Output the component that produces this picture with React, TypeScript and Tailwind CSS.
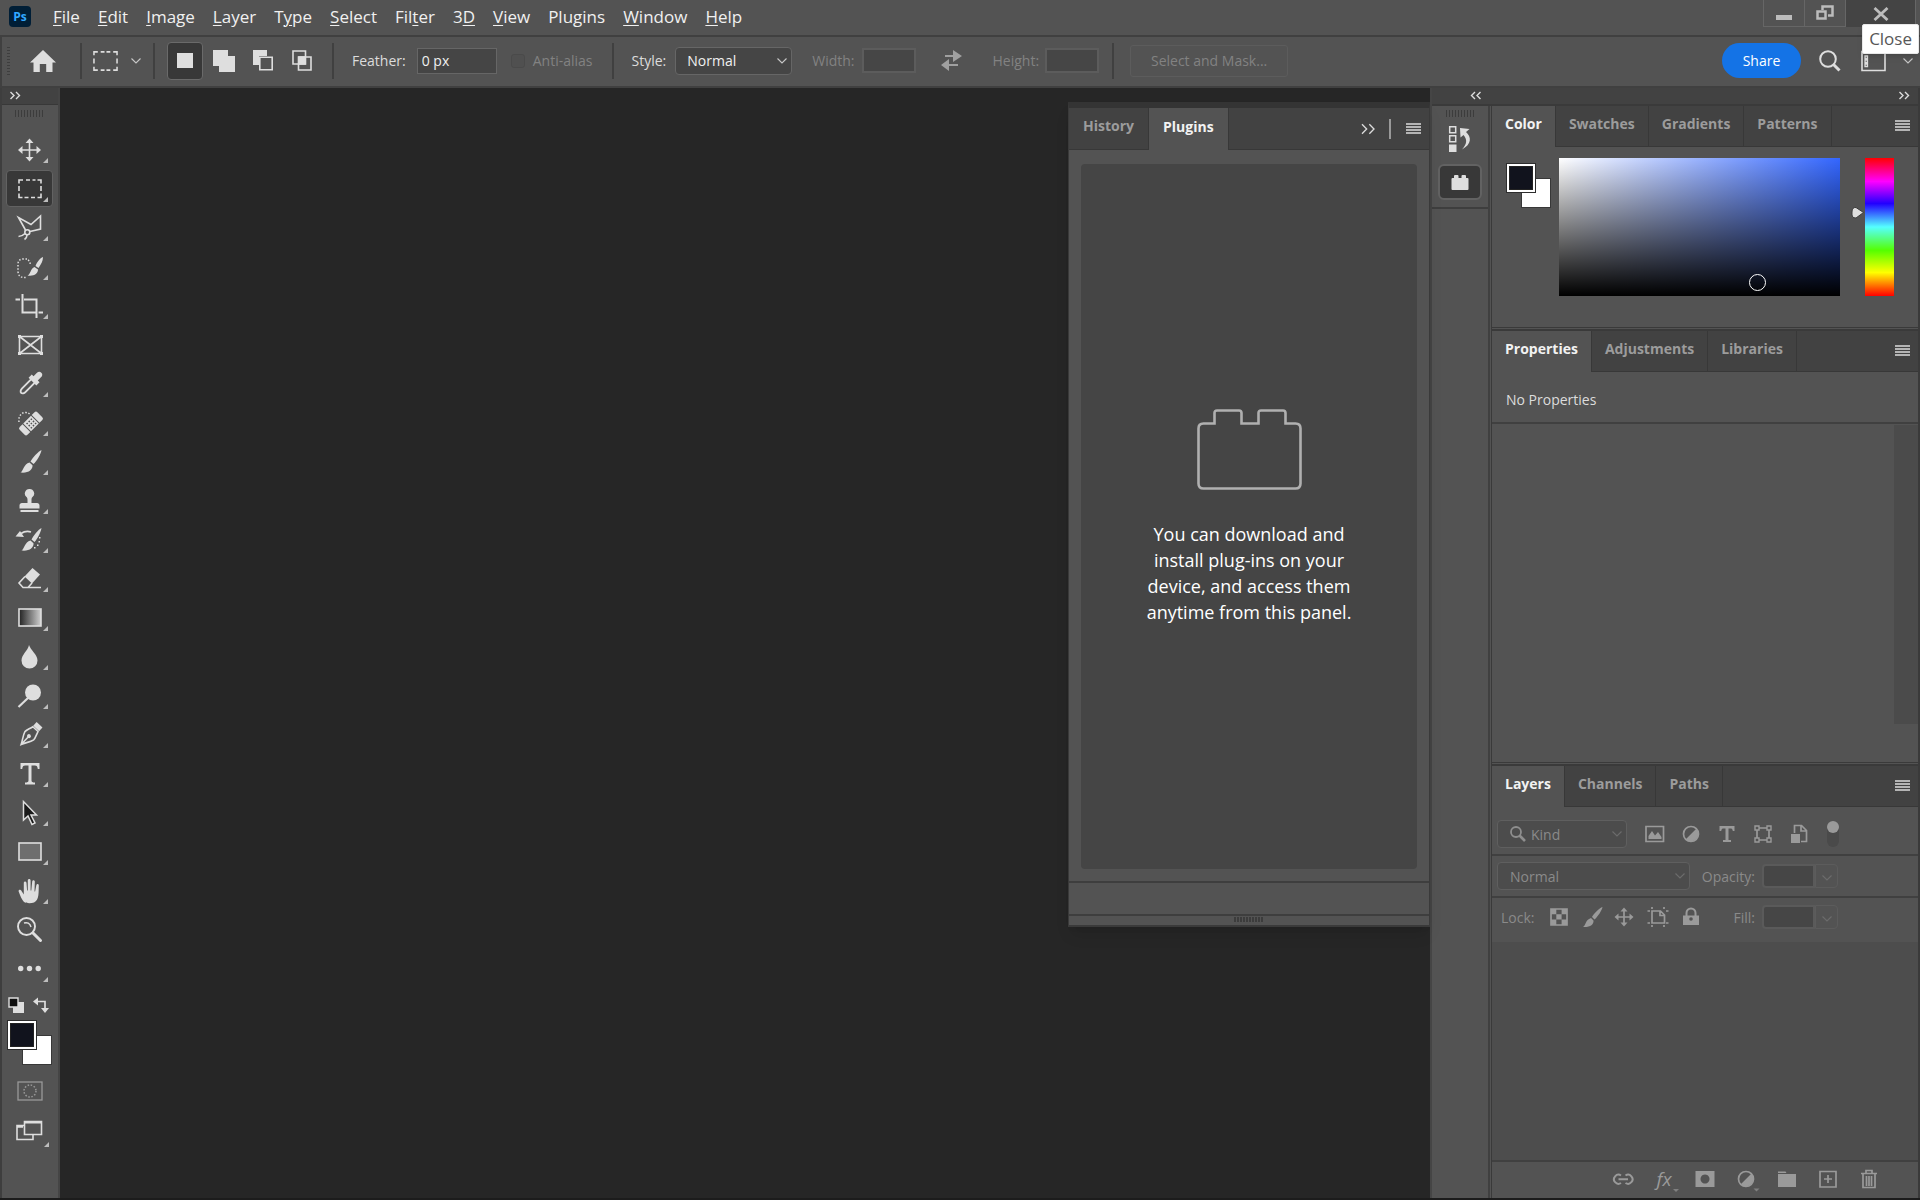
import React from "react";

type Kids = { children?: React.ReactNode };

/* ---------- shared bits ---------- */

const Chevron = ({ className = "text-[#c8c8c8]" }: { className?: string }) => (
  <svg width="12" height="8" viewBox="0 0 12 8" fill="none" stroke="currentColor" strokeWidth="1.1" className={className}>
    <path d="M1.500 1.500 6 6l4.500-4.500" />
  </svg>
);

const DoubleChevron = ({ left = false, large = false }: { left?: boolean; large?: boolean }) => (
  <svg
    width={large ? 16 : 12}
    height={large ? 12 : 9}
    viewBox="0 0 12 9"
    fill="none"
    stroke="#dcdcdc"
    strokeWidth={large ? 1 : 1.4}
    className={left ? "rotate-180" : ""}
  >
    <path d="M1.500 1l3.500 3.500L1.500 8M7 1l3.500 3.500L7 8" />
  </svg>
);

const MenuLines = () => (
  <svg width="15" height="12" viewBox="0 0 15 12" fill="#b4b4b4">
    <path d="M0 0h15v2H0zM0 3h15v2H0zM0 6h15v2H0zM0 9h15v2H0z" />
  </svg>
);

const Grip = () => (
  <svg width="28" height="7" viewBox="0 0 28 7" fill="#3c3c3c" aria-hidden="true">
    <path d="M0 0h1v7H0zM3 0h1v7H3zM6 0h1v7H6zM9 0h1v7H9zM12 0h1v7h-1zM15 0h1v7h-1zM18 0h1v7h-1zM21 0h1v7h-1zM24 0h1v7h-1zM27 0h1v7h-1z" />
  </svg>
);

const Divider = ({ className = "" }: { className?: string }) => (
  <div className={`h-9 w-[2px] shrink-0 bg-[#404040] ${className}`} />
);

const Brush = () => (
  <>
    <path d="M24.500 1c-3 1.500-9 7.500-11 11.500l3 2.500c3.500-3 7.500-10.500 8-14z" />
    <path d="M12.500 13.500l3 2.700c.5 4.500-4.500 8.300-12 7.300 3-1.500 3-8.500 9-10z" />
  </>
);

/* ---------- tool bar ---------- */

const S = { fill: "none", stroke: "#dedede", strokeWidth: 1.6 };

const tools: { name: string; icon: React.ReactNode; menu?: boolean }[] = [
  {
    name: "Move",
    icon: (
      <>
        <path d="M12.500 4v18M4 13h17" {...S} />
        <path d="M12.500 1.500l4 4.500h-8zM12.500 24.500l4-4.500h-8zM1 13l4.500-4v8zM24 13l-4.500-4v8z" />
      </>
    ),
  },
  {
    name: "Rectangular Marquee",
    icon: <path d="M2 7.500V4h4M9 4h4M15.500 4h3M20.500 4H24v3.500M24 10v5M24 17.500V21.500h-3.500M18 21.500h-4M11.500 21.500h-4M5.500 21.500H2v-4M2 15v-5" {...S} />,
  },
  {
    name: "Polygonal Lasso",
    icon: (
      <>
        <path d="M8.500 15L1.500 2.500 14 9.500 23.500 1v13L13 16.500" {...S} />
        <circle cx="10.300" cy="17.300" r="2.500" {...S} />
        <path d="M8 18.500c-2 2-4 3-6.500 3M10 20c0 2-1 3.500-2.500 4.500" {...S} />
      </>
    ),
  },
  {
    name: "Quick Selection",
    icon: (
      <>
        <path d="M10 5H6C3 5 1 7 1 10v7c0 4 2 6.500 6 6.500h3M11 6c1 .5 2 2 2.300 4" fill="none" stroke="#dedede" strokeWidth="1.500" strokeDasharray="1.500 1.700" />
        <path d="M26 3c-3 1-6 5-7.500 9l3 2C24 10.500 26 7 26 3zM17.500 13l3.500 2.500c0 4-4 7-10.500 6 3-1 3-7 7-8.500z" />
      </>
    ),
  },
  {
    name: "Crop",
    icon: <path d="M5.500 1v18.500h13M-1.500 6.500H3M7 6.500h12.500V25M21.500 19.500H26" fill="none" stroke="#dedede" strokeWidth="2" />,
  },
  {
    name: "Frame",
    icon: (
      <>
        <path d="M2.500 4.500h22v17h-22zM2.500 4.500l22 17M24.500 4.500l-22 17" {...S} />
        <path d="M1 3h3v3H1zM23 3h3v3h-3zM1 20h3v3H1zM23 20h3v3h-3z" />
      </>
    ),
    menu: false,
  },
  {
    name: "Eyedropper",
    icon: (
      <g transform="rotate(45 13 13)">
        <path d="M10 0.500a3 3.500 0 0 1 6 0V5h2.500v4.500h-11V5H10z" />
        <path d="M10.500 9v13c0 1.500 1 3.500 2.500 3.500s2.500-2 2.500-3.500V9" {...S} strokeWidth="1.900" />
      </g>
    ),
  },
  {
    name: "Spot Healing Brush",
    icon: (
      <>
        <path d="M2 12C1 6 5 2 9 2.500c2 .3 3 1 4 2" fill="none" stroke="#dedede" strokeWidth="1.500" strokeDasharray="1.500 1.700" />
        <g transform="rotate(-45 14 13.500)">
          <path d="M1.500 10a2 2 0 0 1 2-2h4v11h-4a2 2 0 0 1-2-2zM20.500 8h4a2 2 0 0 1 2 2v7a2 2 0 0 1-2 2h-4zM8.500 8h11v11h-11z" />
          <path d="M10.500 10h1.500v1.500h-1.500zM13.500 10H15v1.500h-1.500zM16.500 10H18v1.500h-1.500zM10.500 13h1.500v1.500h-1.500zM13.500 13H15v1.500h-1.500zM16.500 13H18v1.500h-1.500zM10.500 16h1.500v1.500h-1.500zM13.500 16H15v1.500h-1.500zM16.500 16H18v1.500h-1.500z" fill="#535353" />
        </g>
      </>
    ),
  },
  { name: "Brush", icon: <Brush /> },
  {
    name: "Clone Stamp",
    icon: <path d="M12.500 1a4.500 4.500 0 0 1 3 8c-.8.800-1 1.500-1 3v3H20c1.500 0 2.500 1 2.500 2.500v3h-20v-3C2.500 16 3.500 15 5 15h5.500v-3c0-1.500-.2-2.200-1-3a4.500 4.500 0 0 1 3-8zM3.500 22h18v2h-18z" />,
  },
  {
    name: "History Brush",
    icon: (
      <>
        <path d="M24.500 1c-3 1.500-8 7.500-10 11.500l3 2.500c3-3 6.500-10.500 7-14zM13.500 13.500l3 2.700c.5 4.500-4.500 8.300-12 7.300 3-1.500 3-8.500 9-10z" />
        <path d="M-1.500 9.500L3 4l4 6z" />
        <path d="M4 6.500c3-2 7-2.500 10-1.500" {...S} />
        <path d="M22 10h1.500v1.500H22zM21.500 14H23v1.500h-1.500zM20 17.500h1.500V19H20zM17 20h1.500v1.500H17z" />
      </>
    ),
  },
  {
    name: "Eraser",
    icon: (
      <>
        <path d="M7.500 10.500l8-8.500 7.500 6.500-8 9z" />
        <path d="M8 10.500l-6 6.500 4 4.500h5l4-4.500M6 21.500h18" {...S} />
      </>
    ),
  },
  {
    name: "Gradient",
    icon: (
      <>
        <defs>
          <linearGradient id="toolGradient">
            <stop offset="0" stopColor="#222" />
            <stop offset="1" stopColor="#d0d0d0" />
          </linearGradient>
        </defs>
        <rect x="2" y="4" width="22" height="17" fill="url(#toolGradient)" stroke="#dedede" strokeWidth="1.600" />
      </>
    ),
  },
  { name: "Blur", icon: <path d="M12 1c1.500 5 8.500 9.500 8.500 15.500a8 8 0 0 1-16 0C4.500 10.500 11 6.500 12 1z" /> },
  {
    name: "Dodge",
    icon: (
      <>
        <circle cx="16" cy="9.500" r="8" />
        <path d="M11 15l-9.500 9" fill="none" stroke="#dedede" strokeWidth="2.200" />
      </>
    ),
  },
  {
    name: "Pen",
    icon: (
      <g transform="rotate(43 13 13)">
        <path d="M9 -1h8v5H9z" />
        <path d="M9.500 5h7c1 4 2.500 6 2.500 9-1 4-4 7.500-6 12-2-4.500-5-8-6-12 0-3 1.500-5 2.500-9zM13 25v-9" {...S} />
        <circle cx="13" cy="14.500" r="2" />
      </g>
    ),
  },
  {
    name: "Type",
    icon: <path d="M3.500 2h19v6H20.800c-.3-2.500-1-3.500-3-3.500h-3.300v15c0 1.500 1 2 3.500 2V23.500H8V21.500c2.500 0 3.500-.5 3.500-2v-15H8.200c-2 0-2.700 1-3 3.500H3.500z" />,
  },
  {
    name: "Path Selection",
    icon: <path d="M6.500 1.500v18.500l4.500-4 4 8.500 3-1.500-4-8h5.500z" fill="#1a1a1a" stroke="#dedede" strokeWidth="1.500" />,
  },
  { name: "Rectangle", icon: <rect x="2" y="4" width="22" height="17" fill="#6e6e6e" stroke="#dedede" strokeWidth="1.600" /> },
  {
    name: "Hand",
    icon: <path d="M7 24c-2-2-4-6.500-5.500-11 .5-1.800 2.500-1.300 3.200.3l2.100 3.200V5c0-2 2.500-2 2.700 0l.6 7.500h.7V2.500c0-2 2.800-2 2.800 0v10h.7l.9-9c.3-1.800 2.700-1.500 2.600.3l-.3 9.700h.6l1.300-6.500c.4-1.600 2.500-1.200 2.400.5C21.500 14 22.500 22 17 24.500c-3 1-7.500 1-10-.5z" />,
  },
  {
    name: "Zoom",
    icon: (
      <>
        <circle cx="9.500" cy="9.500" r="8.500" fill="none" stroke="#dedede" strokeWidth="1.900" />
        <path d="M7 6c3-1 6 0 7 4" fill="none" stroke="#dedede" strokeWidth="1.500" />
        <path d="M16 16l7.500 7.500" fill="none" stroke="#dedede" strokeWidth="3" strokeLinecap="round" />
      </>
    ),
    menu: false,
  },
  {
    name: "Edit Toolbar",
    icon: (
      <>
        <circle cx="3.700" cy="12.500" r="2.700" />
        <circle cx="12.500" cy="12.500" r="2.700" />
        <circle cx="21.200" cy="12.500" r="2.700" />
      </>
    ),
  },
];

const CornerMark = () => (
  <svg width="5" height="5" viewBox="0 0 5 5" fill="#bdbdbd" className="absolute right-1 bottom-1">
    <path d="M5 0v5H0z" />
  </svg>
);

function ColorPair({ className = "" }: { className?: string }) {
  return (
    <div className={`relative h-[45px] w-[45px] shrink-0 ${className}`}>
      <button aria-label="Background color" className="absolute right-0 bottom-0 h-[30px] w-[30px] border border-[#383838] bg-white" />
      <button aria-label="Foreground color" className="absolute top-0 left-0 h-[30px] w-[30px] border border-[#2d2d2d] bg-white p-[2px]">
        <span className="block h-full w-full border border-[#222] bg-[#11131d]" />
      </button>
    </div>
  );
}

function ToolBar() {
  return (
    <aside className="flex w-[60px] shrink-0 flex-col border-r-2 border-l-2 border-r-[#454545] border-l-[#3e3e3e] bg-[#535353]">
      <div className="flex h-[17px] shrink-0 items-center border-b border-[#383838] bg-[#424242] pb-px pl-[7px]">
        <DoubleChevron />
      </div>
      <div className="flex h-[26px] shrink-0 items-start pt-[5px] pl-[13px]">
        <Grip />
      </div>
      {tools.map((t, i) => (
        <button
          key={t.name}
          aria-label={`${t.name} Tool`}
          className={
            "relative mb-[2px] ml-[4px] flex h-[37px] w-[47px] shrink-0 items-center justify-center rounded-sm border " +
            (i === 1 ? "border-[#626262] bg-[#383838]" : "border-transparent")
          }
        >
          <svg width="26" height="26" viewBox="0 0 26 26" fill="#dedede" className="overflow-visible">
            {t.icon}
          </svg>
          {t.menu !== false && <CornerMark />}
        </button>
      ))}
      <div className="flex shrink-0 justify-between pt-2 pr-[9px] pl-[6px]">
        <button aria-label="Default colors">
          <svg width="16" height="16" viewBox="0 0 16 16">
            <path d="M5 5h11v11H5z" fill="#dedede" />
            <path d="M1 1h9v9H1z" fill="#111" stroke="#dedede" strokeWidth="1.400" />
          </svg>
        </button>
        <button aria-label="Swap colors">
          <svg width="16" height="16" viewBox="0 0 16 16" fill="#dedede">
            <path d="M3 4.500h9V13" fill="none" stroke="#dedede" strokeWidth="1.700" />
            <path d="M0 4.500L5 .5v8zM12 16l-4-5h8z" />
          </svg>
        </button>
      </div>
      <ColorPair className="mt-[7px] ml-[5px]" />
      <button aria-label="Quick mask" className="mt-4 ml-[15px] w-[26px] shrink-0">
        <svg width="26" height="20" viewBox="0 0 26 20" fill="none" stroke="#999">
          <rect x="1" y="1" width="24" height="18" strokeWidth="1.300" />
          <circle cx="13" cy="10" r="6" strokeWidth="1.500" strokeDasharray="1.500 1.640" />
        </svg>
      </button>
      <button aria-label="Screen mode" className="relative mt-[13px] ml-[4px] h-[37px] w-[47px] shrink-0">
        <svg width="27" height="21" viewBox="0 0 27 21" className="mb-1 ml-[10px]" fill="#535353" stroke="#dedede" strokeWidth="1.600">
          <path d="M1 5.500h16v14H1z" />
          <path d="M8.500 1.500h17v13h-17z" />
          <path d="M8 2.200h18M1 6.500h6" strokeWidth="2.500" />
        </svg>
        <CornerMark />
      </button>
    </aside>
  );
}

/* ---------- title and options bars ---------- */

const menus: [string, string, string][] = [
  ["", "F", "ile"],
  ["", "E", "dit"],
  ["", "I", "mage"],
  ["", "L", "ayer"],
  ["T", "y", "pe"],
  ["", "S", "elect"],
  ["Fil", "t", "er"],
  ["3", "D", ""],
  ["", "V", "iew"],
  ["Plugins", "", ""],
  ["", "W", "indow"],
  ["", "H", "elp"],
];

function TitleBar() {
  return (
    <header className="flex h-[37px] shrink-0 items-center border-b-2 border-[#404040] pb-[2px] pl-[9px]">
      <div className="flex h-[21px] w-[22px] items-center justify-center rounded bg-[#001e36] text-[12px] font-bold text-[#31a8ff]">Ps</div>
      <nav className="ml-[22px] flex gap-[18px] text-[17px] text-[#f0f0f0]">
        {menus.map(([a, b, c]) => (
          <button key={a + b + c} className="leading-6">
            {a}
            <span className="underline decoration-1 underline-offset-2">{b}</span>
            {c}
          </button>
        ))}
      </nav>
      <div className="mr-[4px] ml-auto flex h-[27px] self-start text-[#bcbcbc]">
        <button aria-label="Minimize" className="flex w-[42px] items-center justify-center border border-t-0 border-[#666]">
          <svg width="16" height="16" viewBox="0 0 16 16">
            <path d="M0 10h16v5H0z" fill="currentColor" />
          </svg>
        </button>
        <button aria-label="Restore" className="flex w-[41px] items-center justify-center border-r border-b border-[#666]">
          <svg width="18" height="16" viewBox="0 0 18 16" fill="none" stroke="currentColor" strokeWidth="2.500">
            <path d="M6.500 5V1.500h10v9H12" />
            <path d="M1.500 6.500h8v7h-8z" />
          </svg>
        </button>
        <button aria-label="Close" className="flex w-[70px] items-center justify-center border-r border-[#666] bg-[#444]">
          <svg width="16" height="14" viewBox="0 0 16 14" fill="none" stroke="currentColor" strokeWidth="2.800">
            <path d="M1.500 1l13 12M14.500 1l-13 12" />
          </svg>
        </button>
      </div>
    </header>
  );
}

function OptionsBar() {
  return (
    <div className="relative flex h-[51px] shrink-0 items-center border-b-2 border-l-2 border-[#404040] pr-[6px] pb-[2px] text-[14px] text-[#dcdcdc]">
      <svg width="3" height="28" viewBox="0 0 3 28" className="ml-[5px]">
        <path d="M1.500 0v28" stroke="#3e3e3e" strokeWidth="3" strokeDasharray="1 2" />
      </svg>
      <button aria-label="Home" className="ml-5">
        <svg width="26" height="24" viewBox="0 0 26 24" fill="#dedede">
          <path d="M13 1L0 13.500h3.500V23h6.300v-8h6.400v8h6.300v-9.500H26z" />
        </svg>
      </button>
      <Divider className="ml-6" />
      <button aria-label="Marquee presets" className="ml-[11px] flex items-center gap-3">
        <svg width="25" height="22" viewBox="0 0 26 22" fill="none" stroke="#dedede" strokeWidth="1.600">
          <path d="M1 5V1.500h4M8 1.500h4M14 1.500h4M21 1.500h4V5M25 8.500v5M25 17v3.500h-4M18 20.500h-4M12 20.500H8M5 20.500H1V17M1 13.500v-5" />
        </svg>
        <Chevron />
      </button>
      <Divider className="ml-[11px]" />
      <div className="ml-3 flex items-center">
        <button aria-label="New selection" className="flex h-[38px] w-9 items-center justify-center rounded-sm border border-[#6a6a6a] bg-[#383838]">
          <span className="h-[15px] w-4 bg-[#dedede]" />
        </button>
        <button aria-label="Add to selection" className="ml-[10px]">
          <svg width="22" height="22" viewBox="0 0 22 22" fill="#dedede">
            <path d="M0 0h15v6h7v16H6v-6H0z" />
          </svg>
        </button>
        <button aria-label="Subtract from selection" className="ml-[18px]">
          <svg width="20" height="21" viewBox="0 0 20 21">
            <path d="M0 0h14v6H6v9H0z" fill="#dedede" />
            <path d="M6.800 7.300h12.400v12.400H6.800z" fill="none" stroke="#dedede" strokeWidth="1.600" />
          </svg>
        </button>
        <button aria-label="Intersect with selection" className="ml-[19px]">
          <svg width="20" height="21" viewBox="0 0 20 21" fill="none" stroke="#dedede" strokeWidth="1.600">
            <path d="M1 1h12.500v13H1zM6.500 7H19v13H6.500z" />
            <path d="M7 7h6v7H7z" fill="#dedede" />
          </svg>
        </button>
      </div>
      <Divider className="ml-[20px]" />
      <label className="ml-[18px] flex items-center gap-[11px]">
        Feather:
        <input defaultValue="0 px" className="h-[26px] w-[80px] border border-[#666] bg-[#454545] px-1 text-[#f0f0f0]" />
      </label>
      <label className="ml-[14px] flex items-center gap-[8px] text-[#828282]">
        <input type="checkbox" disabled className="h-[14px] w-[14px] appearance-none rounded-[3px] border border-[#4a4a4a] bg-[#505050]" />
        Anti-alias
      </label>
      <Divider className="ml-[20px]" />
      <label className="ml-[17px] flex items-center gap-[9px]">
        Style:
        <span className="relative flex items-center">
          <select className="h-7 w-[117px] appearance-none rounded border border-[#666] bg-[#454545] pl-[11px] text-[#f0f0f0]">
            <option>Normal</option>
          </select>
          <Chevron className="pointer-events-none absolute right-1 text-[#c8c8c8]" />
        </span>
      </label>
      <label className="ml-5 flex items-center gap-[7px] text-[#828282]">
        Width:
        <input disabled className="h-[25px] w-[54px] border-2 border-[#5c5c5c] bg-[#464646]" />
      </label>
      <button aria-label="Swap width and height" className="ml-[25px]">
        <svg width="21" height="21" viewBox="0 0 21 21" fill="#a0a0a0">
          <path d="M4 6h10M7 15h10" stroke="#a0a0a0" strokeWidth="2" />
          <path d="M12 0l9 6-9 6zM8 9v12l-8-6z" />
        </svg>
      </button>
      <label className="ml-[31px] flex items-center gap-[6px] text-[#828282]">
        Height:
        <input disabled className="h-[25px] w-[54px] border-2 border-[#5c5c5c] bg-[#464646]" />
      </label>
      <Divider className="ml-[13px]" />
      <button disabled className="ml-4 h-8 w-[158px] rounded-[3px] border border-[#5c5c5c] text-[#828282]">
        Select and Mask...
      </button>
      <button className="ml-auto h-[35px] w-[79px] rounded-full bg-[#1473e6] text-white">Share</button>
      <button aria-label="Search" className="ml-[18px]">
        <svg width="22" height="22" viewBox="0 0 22 22" fill="none" stroke="#dedede">
          <circle cx="9" cy="9" r="7.800" strokeWidth="2" />
          <path d="M14.500 14.500l6 6" strokeWidth="3" />
        </svg>
      </button>
      <button aria-label="Workspace" className="ml-[20px] flex items-center gap-[16px]">
        <svg width="25" height="22" viewBox="0 0 25 22" fill="none" stroke="#dedede" strokeWidth="1.600">
          <path d="M1 1.500h23v19H1z" />
          <path d="M4 6h2.500v2.500H4zM4 10h2.500v2.500H4zM4 14h2.500v2.500H4z" strokeWidth="1.300" />
        </svg>
        <Chevron />
      </button>
      <div role="tooltip" className="absolute top-[-13px] right-px rounded-[2px] border border-[#e8e8e8] bg-white px-[6px] text-[17px] leading-7 text-[#575757] shadow-md">
        Close
      </div>
    </div>
  );
}

/* ---------- panels ---------- */

function Tabs({ names, active, floating = false, children }: { names: string[]; active: number; floating?: boolean } & Kids) {
  return (
    <div className={"flex shrink-0 bg-[#424242] text-[14px] font-bold text-[#9c9c9c] " + (floating ? "h-[42px]" : "h-[41px]")} role="tablist">
      {names.map((n, i) => (
        <button
          key={n}
          role="tab"
          aria-selected={i === active}
          className={
            "border-r border-[#383838] pb-[6px] " +
            (floating ? "px-[14px] " : "px-[13px] ") +
            (i === active ? "bg-[#535353] text-[#f2f2f2]" : "border-b")
          }
        >
          {n}
        </button>
      ))}
      <div className="flex flex-1 items-center justify-end gap-[15px] border-b border-[#383838] pr-2">
        {children}
        <button aria-label="Panel menu">
          <MenuLines />
        </button>
      </div>
    </div>
  );
}

const PanelGap = () => <div className="h-1 shrink-0 border-t border-b-2 border-[#3a3a3a]" />;

function PluginsPanel() {
  return (
    <section className="absolute top-[14px] right-0 flex w-[362px] flex-col border-t-[6px] border-r border-b-2 border-l border-t-[#343434] border-r-[#3a3a3a] border-b-[#3a3a3a] border-l-[#3a3a3a] bg-[#535353] shadow-lg">
      <Tabs names={["History", "Plugins"]} active={1} floating>
        <button aria-label="Collapse" className="mr-[-2px]">
          <DoubleChevron large />
        </button>
        <span className="h-5 w-[2px] bg-[#999]" />
      </Tabs>
      <div className="mx-3 mt-[14px] flex h-[705px] flex-col items-center justify-center rounded bg-[#454545] text-center">
        <svg width="105" height="82" viewBox="0 0 105 82" fill="none" stroke="#b0b0b0" strokeWidth="2.600">
          <path d="M17.500 14.500V4q0-2.500 2.500-2.500h22q2.500 0 2.500 2.500v10.500h17V4q0-2.500 2.500-2.500h22q2.500 0 2.500 2.500v10.500h10q5 0 5 5v55q0 5-5 5H6.500q-5 0-5-5v-55q0-5 5-5z" />
        </svg>
        <p className="mt-[30px] w-[220px] text-[18px] leading-[26px] font-medium text-white">
          You can download and install plug-ins on your device, and access them anytime from this panel.
        </p>
      </div>
      <div className="mt-3 h-[35px] border-y-2 border-[#3e3e3e]" />
      <div className="flex h-[9px] items-start justify-center pt-px">
        <svg width="30" height="5" viewBox="0 0 30 5">
          <path d="M0 2.500h30" stroke="#3c3c3c" strokeWidth="5" strokeDasharray="2 1" />
        </svg>
      </div>
    </section>
  );
}

function IconStrip() {
  return (
    <div className="flex w-[58px] shrink-0 flex-col border-r-2 border-[#404040]">
      <div className="flex flex-col items-center border-b-2 border-[#3e3e3e] pt-1 pb-[7px]">
        <Grip />
        <button aria-label="History" className="mt-2">
          <svg width="24" height="28" viewBox="0 0 24 28">
            <path d="M1.700 1.700h6v6h-6zM1.700 10.700h6v6h-6z" fill="none" stroke="#dedede" strokeWidth="1.500" />
            <path d="M1 19.500h7.500V27H1z" fill="#dedede" />
            <path d="M12 3l9.500 1-3.500 3c5.500 5 6 12-4 17.500 5-5.500 5.500-9.500 1.500-14.500L12.500 12.500z" fill="#dedede" />
          </svg>
        </button>
        <button aria-label="Plugins" className="mt-[11px] flex h-9 w-11 items-center justify-center rounded-md border-2 border-[#626262] bg-[#383838]">
          <svg width="18" height="15" viewBox="0 0 18 15" fill="#dedede">
            <path d="M3 3V1q0-1 1-1h2.500q1 0 1 1v2h3V1q0-1 1-1H14q1 0 1 1v2h1.500q1 0 1 1v10q0 1-1 1H1.500q-1 0-1-1V4q0-1 1-1z" />
          </svg>
        </button>
      </div>
    </div>
  );
}

function ColorPanel() {
  return (
    <section>
      <Tabs names={["Color", "Swatches", "Gradients", "Patterns"]} active={0} />
      <div className="flex pt-[11px] pr-[24px] pb-[31px] pl-[14px]">
        <ColorPair className="mt-[5px]" />
        <div
          aria-label="Saturation and brightness"
          className="relative ml-2 h-[138px] flex-1 overflow-hidden bg-[linear-gradient(to_top,#000,rgba(0,0,0,0)),linear-gradient(to_right,#fff,#3366ff)]"
        >
          <span className="absolute right-[74px] bottom-[5px] h-[17px] w-[17px] rounded-full border border-white" />
        </div>
        <svg width="25" height="138" viewBox="0 0 25 138" aria-hidden="true">
          <path d="M12 54q0-5 4-4.500l7.500 5-7.500 5.500q-4 .5-4-3z" fill="#dedede" stroke="#3c3c3c" />
        </svg>
        <div
          aria-label="Hue"
          className="h-[138px] w-[29px] bg-[linear-gradient(to_bottom,#f00_0%,#f0f_17%,#20f_33%,#5ff_50%,#5f0_67%,#ff0_83%,#f00_100%)]"
        />
      </div>
    </section>
  );
}

function PropertiesPanel() {
  return (
    <section>
      <Tabs names={["Properties", "Adjustments", "Libraries"]} active={0} />
      <div className="flex h-[52px] items-center border-b-2 border-[#404040] pt-1 pl-[14px] text-[14px] text-[#dcdcdc]">No Properties</div>
      <div className="flex h-[338px] justify-end">
        <div className="mt-px h-[299px] w-6 bg-[#4b4b4b]" />
      </div>
    </section>
  );
}

function DimSelect({ label, text, className, search = false }: { label: string; text: string; className: string; search?: boolean }) {
  return (
    <span className={`relative flex items-center ${className}`}>
      {search && (
        <svg width="16" height="16" viewBox="0 0 16 16" fill="none" stroke="#8e8e8e" className="pointer-events-none absolute left-[13px]">
          <circle cx="6" cy="6" r="5" strokeWidth="1.800" />
          <path d="M9.500 9.500l5.500 5.500" strokeWidth="2.600" />
        </svg>
      )}
      <select
        aria-label={label}
        disabled
        className={
          "h-7 w-full appearance-none rounded border border-[#5f5f5f] bg-[#4c4c4c] text-[#8a8a8a] opacity-100 " +
          (search ? "pl-[33px]" : "pl-3")
        }
      >
        <option>{text}</option>
      </select>
      <Chevron className="pointer-events-none absolute right-1 text-[#6c6c6c]" />
    </span>
  );
}

function ValueBox({ label, className = "" }: { label: string; className?: string }) {
  return (
    <label className={`flex items-center gap-[7px] ${className}`}>
      {label}
      <span className="flex h-6">
        <input disabled className="w-[53px] rounded-l border-2 border-[#5a5a5a] bg-[#464646]" />
        <span className="flex w-[23px] items-center justify-center rounded-r border border-[#5c5c5c] pt-1">
          <Chevron className="text-[#6c6c6c]" />
        </span>
      </span>
    </label>
  );
}

const dim = "#9a9a9a";
const D = { fill: "none", stroke: dim, strokeWidth: 1.7 };

function DimIcon({ name, className, children }: { name: string; className: string } & Kids) {
  return (
    <button aria-label={name} disabled className={className}>
      <svg width="20" height="20" viewBox="0 0 20 20" fill={dim} className="overflow-visible">
        {children}
      </svg>
    </button>
  );
}

const HalfCircle = () => (
  <>
    <circle cx="10" cy="10" r="7.500" {...D} />
    <path d="M15.500 4.500a7.800 7.800 0 0 1-11 11z" />
  </>
);

function LayersPanel() {
  return (
    <section className="flex min-h-0 flex-1 flex-col text-[14px] text-[#8a8a8a]">
      <Tabs names={["Layers", "Channels", "Paths"]} active={0} />
      <div className="flex items-center border-b-2 border-[#404040] pt-[13px] pb-[6px] pl-[5px]">
        <DimSelect label="Filter type" text="Kind" className="w-[130px]" search />
        <div className="flex items-center gap-4 pl-[18px]">
          <DimIcon name="Filter pixel layers" className="">
            <path d="M1 2.500h17.500v15H1z" {...D} />
            <path d="M3.500 15V12l3.500-5 3 4.500L13 8l3.500 5v2z" />
          </DimIcon>
          <DimIcon name="Filter adjustment layers" className="">
            <HalfCircle />
          </DimIcon>
          <DimIcon name="Filter type layers" className="">
            <path d="M2.500 2h15v5h-1.700c-.3-2-1-2.500-2.500-2.500h-1.800v11.500H14V18H6v-2h2.500V4.500H6.700C5.200 4.500 4.500 5 4.200 7H2.500z" />
          </DimIcon>
          <DimIcon name="Filter shape layers" className="">
            <path d="M4 4h12v12H4z" {...D} />
            <path d="M2 2h4v4H2zM14 2h4v4h-4zM2 14h4v4H2zM14 14h4v4h-4z" fill="#535353" stroke={dim} strokeWidth="1.400" />
          </DimIcon>
          <DimIcon name="Filter smart objects" className="">
            <path d="M5.500 9V1.500h7l5 5v11H12M12 2v5h5" {...D} />
            <path d="M2 10h9v9H2z" />
          </DimIcon>
          <DimIcon name="Toggle filtering" className="">
            <rect x="2" y="-1" width="12" height="24" rx="6" fill="#4a4a4a" />
            <circle cx="8" cy="3" r="6" />
          </DimIcon>
        </div>
      </div>
      <div className="flex items-center border-b-2 border-[#404040] pt-[6px] pb-[6px] pl-[5px]">
        <DimSelect label="Blend mode" text="Normal" className="w-[193px]" />
        <ValueBox label="Opacity:" className="w-[148px] justify-end" />
      </div>
      <div className="flex items-center pt-[7px] pb-[13px] pl-[9px]">
        <span className="w-[48px]">Lock:</span>
        <DimIcon name="Lock transparency" className="">
          <path d="M2 2h16v16H2z" {...D} />
          <path d="M2 2h5.300v5.300H2zM12.600 2H18v5.300h-5.400zM7.300 7.300h5.300v5.300H7.300zM2 12.600h5.300V18H2zM12.600 12.600H18V18h-5.400z" />
        </DimIcon>
        <DimIcon name="Lock pixels" className="ml-[14px]">
          <path d="M19.500 0c-3 1-9 7-10.500 10l2.500 2.500C14.500 10 19 3.500 19.500 0zM8 11l2.500 2.500c.5 4-3.500 7-10.500 6.500 3-1.500 2-7 8-9z" />
        </DimIcon>
        <DimIcon name="Lock position" className="ml-[11px]">
          <path d="M10 3v14M3 10h14" {...D} />
          <path d="M10 .5l3.500 4h-7zM10 19.500l3.500-4h-7zM.5 10l4-3.500v7zM19.500 10l-4-3.500v7z" />
        </DimIcon>
        <DimIcon name="Lock artboards" className="ml-[14px]">
          <path d="M4 4h8.500l4 4v8H4zM12 4v4.500h4.500M-.5 4H2M-.5 16H2M18 4h2.500M18 16h2.500M4 0v2M4 18v2M16 0v2M16 18v2" {...D} />
        </DimIcon>
        <DimIcon name="Lock all" className="ml-[13px]">
          <path d="M5.500 9V6a4.500 4.500 0 0 1 9 0v3" fill="none" stroke={dim} strokeWidth="2" />
          <path d="M2 8.500h16V18H2z" />
          <circle cx="10" cy="12" r="1.800" fill="#535353" />
        </DimIcon>
        <ValueBox label="Fill:" className="w-[137px] justify-end" />
      </div>
      <div className="min-h-0 flex-1 border-b-2 border-[#404040] bg-[#4d4d4d]" />
      <div className="flex h-9 shrink-0 items-center justify-end gap-[21px] pr-[39px] pb-[3px]">
        <DimIcon name="Link layers" className="">
          <path d="M8 6.500A4.500 4.500 0 1 0 8 14M12.500 6.500a4.500 4.500 0 1 1 0 7.500M5.500 10.200h9.500" fill="none" stroke={dim} strokeWidth="2" />
        </DimIcon>
        <button aria-label="Layer style" disabled className="relative w-5 text-[19px] leading-5 text-[#9a9a9a] italic">
          fx
          <svg width="6" height="3" viewBox="0 0 6 3" fill="#808080" className="absolute right-[-5px] bottom-[-3px]">
            <path d="M0 0h6L3 3z" />
          </svg>
        </button>
        <DimIcon name="Add mask" className="">
          <path d="M.5 2h19v16H.5zM10 5.500a4.500 4.500 0 1 0 .01 0z" fillRule="evenodd" />
        </DimIcon>
        <DimIcon name="New adjustment layer" className="">
          <HalfCircle />
          <path d="M17.500 19.500h6l-3 3z" fill="#808080" />
        </DimIcon>
        <DimIcon name="New group" className="">
          <path d="M1 2.500h7.500l1 1.500H1zM1 5h18v13H1z" />
        </DimIcon>
        <DimIcon name="New layer" className="">
          <path d="M2 2.500h16v15.500H2zM10 6v8M6 10h8" {...D} />
        </DimIcon>
        <DimIcon name="Delete layer" className="">
          <path d="M2 4.500h16M7 4V1.500h6V4M4 5v13.500h12V5M7.500 7v10M10 7v10M12.500 7v10" {...D} />
        </DimIcon>
      </div>
    </section>
  );
}

export default function App() {
  return (
    <div className="flex h-screen flex-col overflow-hidden border-b-2 border-[#1c1c1c] bg-[#535353] font-['Open_Sans','Noto_Sans',sans-serif]">
      <TitleBar />
      <OptionsBar />
      <div className="flex min-h-0 flex-1">
        <ToolBar />
        <main className="relative min-w-0 flex-1 bg-[#262626]">
          <PluginsPanel />
        </main>
        <div className="flex w-[490px] shrink-0 flex-col border-r-2 border-l-2 border-r-[#3a3a3a] border-l-[#454545]">
          <div className="flex h-[18px] shrink-0 items-center border-b-2 border-[#3a3a3a] bg-[#424242] pr-2 pb-px pl-[38px]">
            <DoubleChevron left />
            <span className="ml-auto flex">
              <DoubleChevron />
            </span>
          </div>
          <div className="flex min-h-0 flex-1">
            <IconStrip />
            <div className="ml-px flex min-w-0 flex-1 flex-col border-l border-[#3a3a3a]">
              <ColorPanel />
              <PanelGap />
              <PropertiesPanel />
              <PanelGap />
              <LayersPanel />
            </div>
          </div>
        </div>
      </div>
    </div>
  );
}
